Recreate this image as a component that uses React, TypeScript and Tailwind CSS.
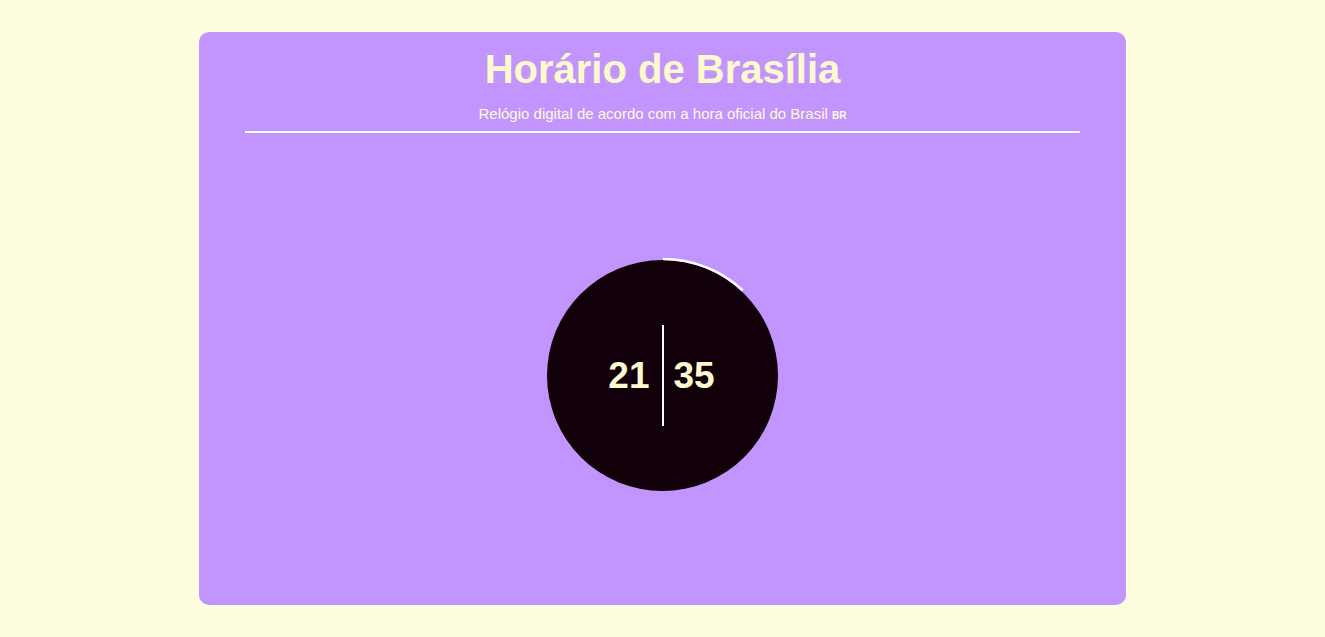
import React from "react";

export default function App() {
  const r = 117;
  const cx = 120;
  const cy = 120;
  const ang = (43 * Math.PI) / 180;
  const ex = cx + r * Math.sin(ang);
  const ey = cy - r * Math.cos(ang);
  return (
    <div
      className="w-full h-screen bg-[#fffddf] flex items-center justify-center"
      style={{ fontFamily: '"Liberation Sans", Arial, sans-serif' }}
    >
      <div className="w-[70%] h-[90vh] bg-[#c294fe] rounded-[10px] flex flex-col items-center">
        <h1 className="mt-[13px] text-[40px] leading-[48px] font-bold text-[#fffacd]">
          Horário de Brasília
        </h1>
        <p className="mt-[12px] text-[15px] leading-[18px] text-[#fffbe0]">
          Relógio digital de acordo com a hora oficial do Brasil{" "}
          <span className="text-[10px] font-bold">BR</span>
        </p>
        <div className="mt-[6px] w-[90%] h-[2px] bg-white" />
        <div className="flex-1 flex items-center justify-center pt-[14px]">
          <div className="relative w-[231px] h-[231px] rounded-full bg-[#11000a] flex items-center justify-center">
            <svg
              className="absolute"
              width="240"
              height="240"
              viewBox="0 0 240 240"
              style={{ left: -4.5, top: -4.5 }}
            >
              <path
                d={`M ${cx} ${cy - r} A ${r} ${r} 0 0 1 ${ex} ${ey}`}
                fill="none"
                stroke="#ffffff"
                strokeWidth="2.5"
              />
            </svg>
            <span className="text-[37px] font-bold text-[#fffacd] leading-none w-[52px] text-right pr-[2px]">21</span>
            <div className="w-[2px] h-[101px] bg-white mx-[10px]" />
            <span className="text-[37px] font-bold text-[#fffacd] leading-none w-[52px] text-left">35</span>
          </div>
        </div>
      </div>
    </div>
  );
}
